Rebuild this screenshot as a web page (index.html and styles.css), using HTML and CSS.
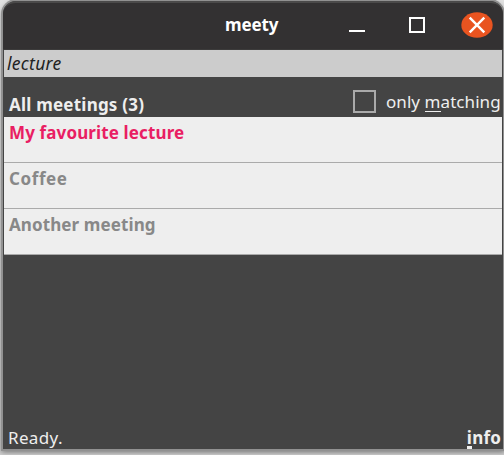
FILE: index.html
```html
<!DOCTYPE html>
<html lang="en">
<head>
<meta charset="utf-8">
<title>meety</title>
<link rel="stylesheet" href="styles.css">
</head>
<body>
<main class="window">
  <header class="titlebar">
    <h1 class="title">meety</h1>
    <div class="controls">
      <svg width="16" height="16" viewBox="0 0 16 16"><path d="M0 14H16" stroke="#fff" stroke-width="2"/></svg>
      <svg width="16" height="16" viewBox="0 0 16 16"><rect x="1" y="1" width="14" height="14" fill="none" stroke="#fff" stroke-width="2"/></svg>
      <svg class="close" width="32" height="26" viewBox="0 0 32 26"><ellipse cx="16" cy="13" rx="15.7" ry="12.8" fill="#e95420"/><path d="M8.7 5.7L23.3 20.3M23.3 5.7L8.7 20.3" stroke="#fff" stroke-width="2.4"/></svg>
    </div>
  </header>
  <div class="search"><span class="query">lecture</span></div>
  <div class="heading">
    <span class="count">All meetings (3)</span>
    <div class="filter"><span class="checkbox"></span><span class="label">only <span class="key">m</span>atching</span></div>
  </div>
  <ul class="meetings">
    <li class="match"><span class="name-match">My favourite lecture</span></li>
    <li><span class="name-coffee">Coffee</span></li>
    <li><span class="name-another">Another meeting</span></li>
  </ul>
  <footer class="status"><span class="ready">Ready.</span><span class="info"><span class="infokey">i</span>nfo</span></footer>
</main>
</body>
</html>
```
FILE: styles.css
```css
* { box-sizing: border-box; }
body {
  margin: 0;
  width: 504px;
  height: 455px;
  overflow: hidden;
  padding: 1px 1px 5px 3px;
  background: linear-gradient(#e2e2e2 0, #c4c4c4 450px, #cecece 455px);
  font: 17px/24px "Noto Sans", sans-serif;
  color: #eee;
}
.window {
  display: flex;
  flex-direction: column;
  width: 500px;
  height: 448px;
  background: #444;
  border-radius: 13px 13px 0 0;
  box-shadow: 0 0 0 2px #919191, 0 2px 5px 1px #777;
}
.titlebar {
  display: flex;
  height: 49px;
  background: #333132;
  border-top: 2px solid #4b4a4a;
  border-bottom: 1px solid #3c3b3b;
  border-radius: 13px 13px 0 0;
}
.title {
  margin: 10px 0 0 222px;
  width: 60px;
  font-size: 17px;
  line-height: 24px;
  letter-spacing: -.1px;
  color: #fff;
}
.controls {
  display: flex;
  flex: 1;
  justify-content: flex-end;
  gap: 44px;
  padding: 14px 10px 0 0;
}
.close { margin: -5px 0 0 -8px; }
.search {
  height: 27px;
  margin: 0 1px;
  padding-left: 3px;
  background: #ccc;
  color: #222;
  font-size: 17.5px;
  font-style: italic;
  letter-spacing: .3px;
  line-height: 27px;
}
.heading {
  display: flex;
  justify-content: space-between;
  height: 40px;
  padding: 13px 2px 0 6px;
}
.count { margin-top: 3px; font-weight: 700; letter-spacing: .22px; }
.filter { display: flex; }
.checkbox {
  width: 23px;
  height: 23px;
  margin-right: 10px;
  border: 2px solid #aaa;
}
.label { width: 115px; white-space: nowrap; letter-spacing: .06px; }
.key { display: inline-block; height: 22px; border-bottom: 1px solid #eee; }
.meetings {
  list-style: none;
  margin: 0 1px;
  padding: 0;
  background: #eee;
  color: #888;
  font-weight: 700;
}
.meetings li { height: 46px; padding: 4px 5px 0; border-bottom: 1px solid #aaa; }
.meetings .match { color: #e91e63; }
.name-match { letter-spacing: .13px; }
.name-coffee { letter-spacing: .6px; }
.name-another { letter-spacing: .1px; }
.status {
  display: flex;
  justify-content: space-between;
  margin-top: auto;
  height: 24px;
  padding: 0 2px 0 5px;
}
.ready { letter-spacing: .35px; margin-top: 1px; height: 23px; }
.info { font-weight: 700; padding-top: 1px; height: 24px; letter-spacing: .2px; }
.infokey { display: inline-block; height: 23px; border-bottom: 3px solid #eee; }
```
